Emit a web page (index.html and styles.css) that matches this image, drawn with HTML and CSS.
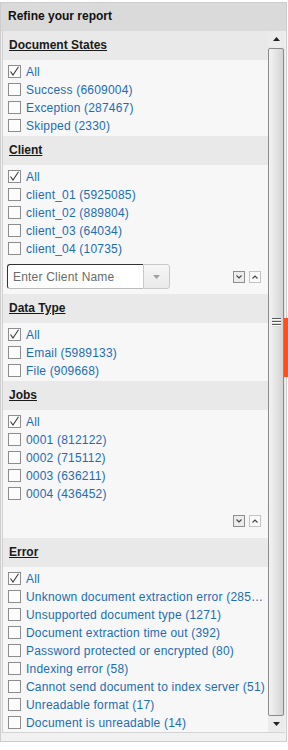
FILE: index.html
```html
<!DOCTYPE html>
<html>
<head>
<meta charset="utf-8">
<link rel="stylesheet" href="styles.css">
</head>
<body>
<div class="panel">
  <div class="panel-title">Refine your report</div>
  <div class="scroller">
    <div class="content">
      <section class="group">
        <h3 class="group-head"><span>Document States</span></h3>
        <ul class="opts">
          <li><span class="cb on"><svg viewBox="0 0 11 11"><path d="M1.5 5.5 L4 9 L9.5 0.8"/></svg></span><span class="lbl">All</span></li>
          <li><span class="cb"></span><span class="lbl">Success (6609004)</span></li>
          <li><span class="cb"></span><span class="lbl">Exception (287467)</span></li>
          <li><span class="cb"></span><span class="lbl">Skipped (2330)</span></li>
        </ul>
      </section>
      <section class="group">
        <h3 class="group-head"><span>Client</span></h3>
        <ul class="opts">
          <li><span class="cb on"><svg viewBox="0 0 11 11"><path d="M1.5 5.5 L4 9 L9.5 0.8"/></svg></span><span class="lbl">All</span></li>
          <li><span class="cb"></span><span class="lbl">client_01 (5925085)</span></li>
          <li><span class="cb"></span><span class="lbl">client_02 (889804)</span></li>
          <li><span class="cb"></span><span class="lbl">client_03 (64034)</span></li>
          <li><span class="cb"></span><span class="lbl">client_04 (10735)</span></li>
        </ul>
        <div class="tools tools-input">
          <div class="combo">
            <input class="combo-input" type="text" placeholder="Enter Client Name">
            <span class="combo-btn"><svg viewBox="0 0 7 4"><path d="M0 0 H7 L3.5 4 Z"/></svg></span>
          </div>
          <div class="mini-btns">
            <span class="mini dark"><svg viewBox="0 0 8 8"><path d="M1.5 2.5 L4 5 L6.5 2.5"/></svg></span>
            <span class="mini"><svg viewBox="0 0 8 8"><path d="M1.5 5.5 L4 3 L6.5 5.5"/></svg></span>
          </div>
        </div>
      </section>
      <section class="group">
        <h3 class="group-head"><span>Data Type</span></h3>
        <ul class="opts">
          <li><span class="cb on"><svg viewBox="0 0 11 11"><path d="M1.5 5.5 L4 9 L9.5 0.8"/></svg></span><span class="lbl">All</span></li>
          <li><span class="cb"></span><span class="lbl">Email (5989133)</span></li>
          <li><span class="cb"></span><span class="lbl">File (909668)</span></li>
        </ul>
      </section>
      <section class="group">
        <h3 class="group-head"><span>Jobs</span></h3>
        <ul class="opts">
          <li><span class="cb on"><svg viewBox="0 0 11 11"><path d="M1.5 5.5 L4 9 L9.5 0.8"/></svg></span><span class="lbl">All</span></li>
          <li><span class="cb"></span><span class="lbl">0001 (812122)</span></li>
          <li><span class="cb"></span><span class="lbl">0002 (715112)</span></li>
          <li><span class="cb"></span><span class="lbl">0003 (636211)</span></li>
          <li><span class="cb"></span><span class="lbl">0004 (436452)</span></li>
        </ul>
        <div class="tools tools-jobs">
          <div class="mini-btns">
            <span class="mini dark"><svg viewBox="0 0 8 8"><path d="M1.5 2.5 L4 5 L6.5 2.5"/></svg></span>
            <span class="mini"><svg viewBox="0 0 8 8"><path d="M1.5 5.5 L4 3 L6.5 5.5"/></svg></span>
          </div>
        </div>
      </section>
      <section class="group">
        <h3 class="group-head"><span>Error</span></h3>
        <ul class="opts">
          <li><span class="cb on"><svg viewBox="0 0 11 11"><path d="M1.5 5.5 L4 9 L9.5 0.8"/></svg></span><span class="lbl">All</span></li>
          <li><span class="cb"></span><span class="lbl">Unknown document extraction error (285563)</span></li>
          <li><span class="cb"></span><span class="lbl">Unsupported document type (1271)</span></li>
          <li><span class="cb"></span><span class="lbl">Document extraction time out (392)</span></li>
          <li><span class="cb"></span><span class="lbl">Password protected or encrypted (80)</span></li>
          <li><span class="cb"></span><span class="lbl">Indexing error (58)</span></li>
          <li><span class="cb"></span><span class="lbl">Cannot send document to index server (51)</span></li>
          <li><span class="cb"></span><span class="lbl">Unreadable format (17)</span></li>
          <li><span class="cb"></span><span class="lbl">Document is unreadable (14)</span></li>
        </ul>
      </section>
    </div>
    <div class="vscroll">
      <div class="vs-btn"><svg viewBox="0 0 7 4"><path d="M3.5 0 L7 4 H0 Z"/></svg></div>
      <div class="vs-track">
        <div class="vs-thumb">
          <span class="grip"></span>
        </div>
      </div>
      <div class="vs-btn"><svg viewBox="0 0 7 4"><path d="M0 0 H7 L3.5 4 Z"/></svg></div>
    </div>
  </div>
</div>
<div class="edge-marker"></div>
</body>
</html>
```

FILE: styles.css
```css
html, body {
  margin: 0;
  padding: 0;
  background: #ffffff;
}
body {
  font-family: "Liberation Sans", Arial, sans-serif;
  font-size: 12px;
  color: #222;
  padding-top: 2px;
}
.panel {
  width: 285px;
  border: 1px solid #cdcdcd;
  background: #f1f1f1;
  padding-bottom: 8px;
}
.panel-title {
  height: 28px;
  line-height: 27px;
  background: #dadada;
  font-weight: bold;
  color: #111;
  padding-left: 7px;
}
.scroller {
  display: flex;
  height: 702px;
  margin-left: 1px;
  width: 283px;
  border-left: 1px solid #d0d0d0;
  border-bottom: 1px solid #d4d4d4;
  box-sizing: border-box;
  height: 702px;
  overflow: hidden;
  background: #f7f7f7;
}
.content {
  width: 265px;
  flex: none;
}
.group {
  background: #f7f7f7;
}
.group-head {
  margin: 0;
  height: 29px;
  line-height: 29px;
  background: #e9e9e9;
  font-size: 12px;
  font-weight: bold;
  color: #1a1a1a;
  padding-left: 6px;
}
.group-head span {
  text-decoration: underline;
}
.opts {
  list-style: none;
  margin: 0;
  padding: 3px 0 1px 5px;
}
.opts li {
  display: flex;
  align-items: center;
  height: 18px;
  gap: 5px;
}
.cb {
  flex: none;
  width: 11px;
  height: 11px;
  border: 1px solid #8d8d8d;
  background: #fcfcfc;
  position: relative;
  top: -1px;
}
.cb svg {
  display: block;
  width: 11px;
  height: 11px;
}
.cb svg path {
  fill: none;
  stroke: #3a3a3a;
  stroke-width: 1.1;
}
.lbl {
  color: #1d6db3;
  letter-spacing: 0.2px;
  white-space: nowrap;
  overflow: hidden;
  text-overflow: ellipsis;
  min-width: 0;
  line-height: 18px;
}
.tools {
  display: flex;
  align-items: center;
  justify-content: space-between;
  padding-right: 7px;
}
.tools-input {
  padding-left: 4px;
  padding-top: 5px;
  padding-bottom: 5px;
}
.tools-jobs {
  height: 34px;
  justify-content: flex-end;
}
.combo {
  display: flex;
  height: 25px;
}
.combo-input {
  width: 136px;
  height: 25px;
  box-sizing: border-box;
  margin: 0;
  border: 1px solid #bbb;
  border-top-color: #333;
  border-left-color: #333;
  border-right: none;
  border-radius: 3px 0 0 3px;
  background: #fff;
  font-family: "Liberation Sans", Arial, sans-serif;
  font-size: 12px;
  letter-spacing: 0.2px;
  padding: 0 0 0 5px;
  outline: none;
}
.combo-input::placeholder {
  color: #6b6b6b;
}
.combo-btn {
  width: 27px;
  height: 25px;
  box-sizing: border-box;
  border: 1px solid #c9c9c9;
  border-radius: 0 3px 3px 0;
  background: linear-gradient(#f6f6f6, #e9e9e9);
  display: flex;
  align-items: center;
  justify-content: center;
}
.combo-btn svg {
  width: 7px;
  height: 4px;
}
.combo-btn svg path {
  fill: #a0a0a0;
}
.mini-btns {
  display: flex;
  gap: 4px;
}
.mini {
  width: 10px;
  height: 10px;
  border: 1px solid #c4c4c4;
  background: #f9f9f9;
  display: flex;
  align-items: center;
  justify-content: center;
}
.mini.dark {
  border-color: #8e8e8e;
  background: #ececec;
}
.mini svg {
  width: 8px;
  height: 8px;
}
.mini svg path {
  fill: none;
  stroke: #444;
  stroke-width: 1.1;
}
.vscroll {
  width: 17px;
  flex: none;
  display: flex;
  flex-direction: column;
  background: linear-gradient(90deg, #e2e2e2, #eeeeee 50%, #e4e4e4);
}
.vs-btn {
  height: 16px;
  display: flex;
  align-items: center;
  justify-content: center;
  background: #ececec;
}
.vs-btn svg {
  width: 7px;
  height: 4px;
}
.vs-btn svg path {
  fill: #222;
}
.vs-track {
  flex: 1;
  padding: 1px 1px 0 0;
  display: flex;
}
.vs-thumb {
  flex: 1;
  border: 1px solid #8a8a8a;
  border-radius: 2px;
  background: linear-gradient(90deg, #f3f3f3, #e6e6e6 45%, #d3d3d3);
  display: flex;
  justify-content: center;
  padding-top: 269px;
}
.grip {
  display: block;
  width: 9px;
  height: 9px;
  background: repeating-linear-gradient(#5a5a5a 0 1px, #fafafa 1px 2px, #d8d8d8 2px 3px);
}
.edge-marker {
  position: absolute;
  left: 284px;
  top: 318px;
  width: 4px;
  height: 59px;
  background: #ff4f1a;
}
```
